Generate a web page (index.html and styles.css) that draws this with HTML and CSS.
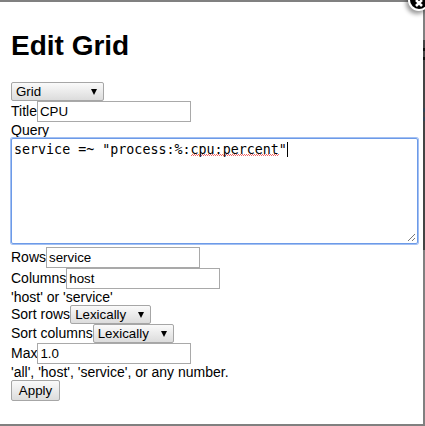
FILE: index.html
```html
<!DOCTYPE html>
<html lang="en">
<head>
    <meta charset="UTF-8">
    <title>Edit Grid</title>
    <link rel="stylesheet" href="styles.css">
</head>
<body>
    <div class="modal">
        <!-- page behind the modal, seen through the right border -->
        <div class="backdrop-edge"></div>
        <a class="close" href="#">
            <svg width="18" height="18" viewBox="0 0 18 18"><path d="M6 9 12 15M12 9 6 15" stroke="#fff" stroke-width="2.5" fill="none"/></svg>
        </a>
        <h1>Edit Grid</h1>
        <form class="edit-form">
            <div class="row select-row"><span class="fake-select type-select">Grid</span></div>
            <div class="row">Title<input class="field" type="text" value="CPU"></div>
            <div class="row label-row">Query</div>
            <div class="query"><span class="query-text">service =~ "process:%:<span class="typo">cpu:percent</span>"</span><span class="caret"></span>
                <svg class="grip" width="9" height="9" viewBox="0 0 9 9"><path d="M1 8 8 1M5 8 8 5" stroke="#777" fill="none"/></svg>
            </div>
            <div class="row">Rows<input class="field" type="text" value="service"></div>
            <div class="row">Columns<input class="field" type="text" value="host"></div>
            <div class="row label-row">'host' or 'service'</div>
            <div class="row select-row">Sort rows<span class="fake-select">Lexically</span></div>
            <div class="row select-row">Sort columns<span class="fake-select">Lexically</span></div>
            <div class="row">Max<input class="field" type="text" value="1.0"></div>
            <div class="row label-row">'all', 'host', 'service', or any number.</div>
            <div class="row"><button type="button" class="apply">Apply</button></div>
        </form>
    </div>
</body>
</html>
```
FILE: styles.css
```css
/* Page */
html, body {
    margin: 0;
    padding: 0;
    height: 426px;
    overflow: hidden;
}

body {
    background: #fff;
    font-family: "Liberation Sans", Arial, sans-serif;
    font-size: 14px;
    color: #000;
}

/* Modal */
.modal {
    width: 425px;
    height: 426px;
    box-sizing: border-box;
    background: #fff;
    border-top: 2px solid #808080;
    border-right: 2px solid #808080;
    border-bottom: 2px solid #808080;
    padding: 0 0 0 11px;
    position: relative;
}

.modal h1 {
    margin: 28px 0 20px;
    font-size: 28px;
    line-height: 32px;
    font-weight: bold;
}

.backdrop-edge {
    position: absolute;
    top: 38px;
    right: -2px;
    width: 2px;
    height: 210px;
    background: linear-gradient(#444 0 8px, #111 8px 11px, #444 11px 17px, #111 17px 20px, #444 20px 68px, #345 68px 72px, #444 72px 77px, #345 77px 81px, #444 81px);
}

/* Close button */
.close {
    position: absolute;
    top: -11px;
    right: -5px;
    width: 18px;
    height: 18px;
    border-radius: 50%;
    background: #000;
    box-shadow: 0 0 0 2px #fff, -2px 3px 4px 2px rgba(0, 0, 0, 0.4);
}

.close svg {
    display: block;
}

/* Form rows */
.row {
    display: flex;
    align-items: baseline;
}

.label-row {
    height: 16px;
}

.select-row {
    height: 19px;
}

.field {
    width: 154px;
    height: 21px;
    box-sizing: border-box;
    margin: 0;
    padding: 1px 2px;
    border: 1px solid #a9a9a9;
    font-family: "Liberation Sans", Arial, sans-serif;
    font-size: 13.333px;
}

.fake-select {
    display: flex;
    align-items: center;
    justify-content: space-between;
    height: 19px;
    box-sizing: border-box;
    padding: 0 6px 0 4px;
    width: 81px;
    border: 1px solid #a6a6a6;
    border-radius: 2px;
    background: linear-gradient(#fafafa, #dcdcdc);
    font-size: 13.333px;
}

.fake-select::after {
    content: "";
    border-top: 6px solid #000;
    border-left: 3px solid transparent;
    border-right: 3px solid transparent;
}

.type-select {
    width: 93px;
}

/* Query box */
.query {
    width: 407px;
    height: 106px;
    margin-bottom: 3px;
    box-sizing: border-box;
    border: 1px solid #6c9ae8;
    box-shadow: 0 0 0 1px #a3c0f2;
    border-radius: 2px;
    padding: 3px 2px;
    font-family: "DejaVu Sans Mono", monospace;
    font-size: 13.333px;
    line-height: 15px;
    position: relative;
}

/* tiny red spell-check squiggle */
.typo {
    background-image: linear-gradient(90deg, #e66 50%, transparent 50%), linear-gradient(90deg, #e66 50%, transparent 50%);
    background-size: 2px 1px;
    background-position: 0 calc(100% - 1px), 1px calc(100% - 2px);
    background-repeat: repeat-x;
}

.caret {
    display: inline-block;
    width: 1px;
    height: 15px;
    background: #000;
    vertical-align: top;
}

.grip {
    position: absolute;
    right: 1px;
    bottom: 1px;
}

/* Apply button */
.apply {
    height: 21px;
    width: 49px;
    padding: 0;
    border: 1px solid #a6a6a6;
    border-radius: 2px;
    background: linear-gradient(#fafafa, #dcdcdc);
    font-family: "Liberation Sans", Arial, sans-serif;
    font-size: 13.333px;
}
```
